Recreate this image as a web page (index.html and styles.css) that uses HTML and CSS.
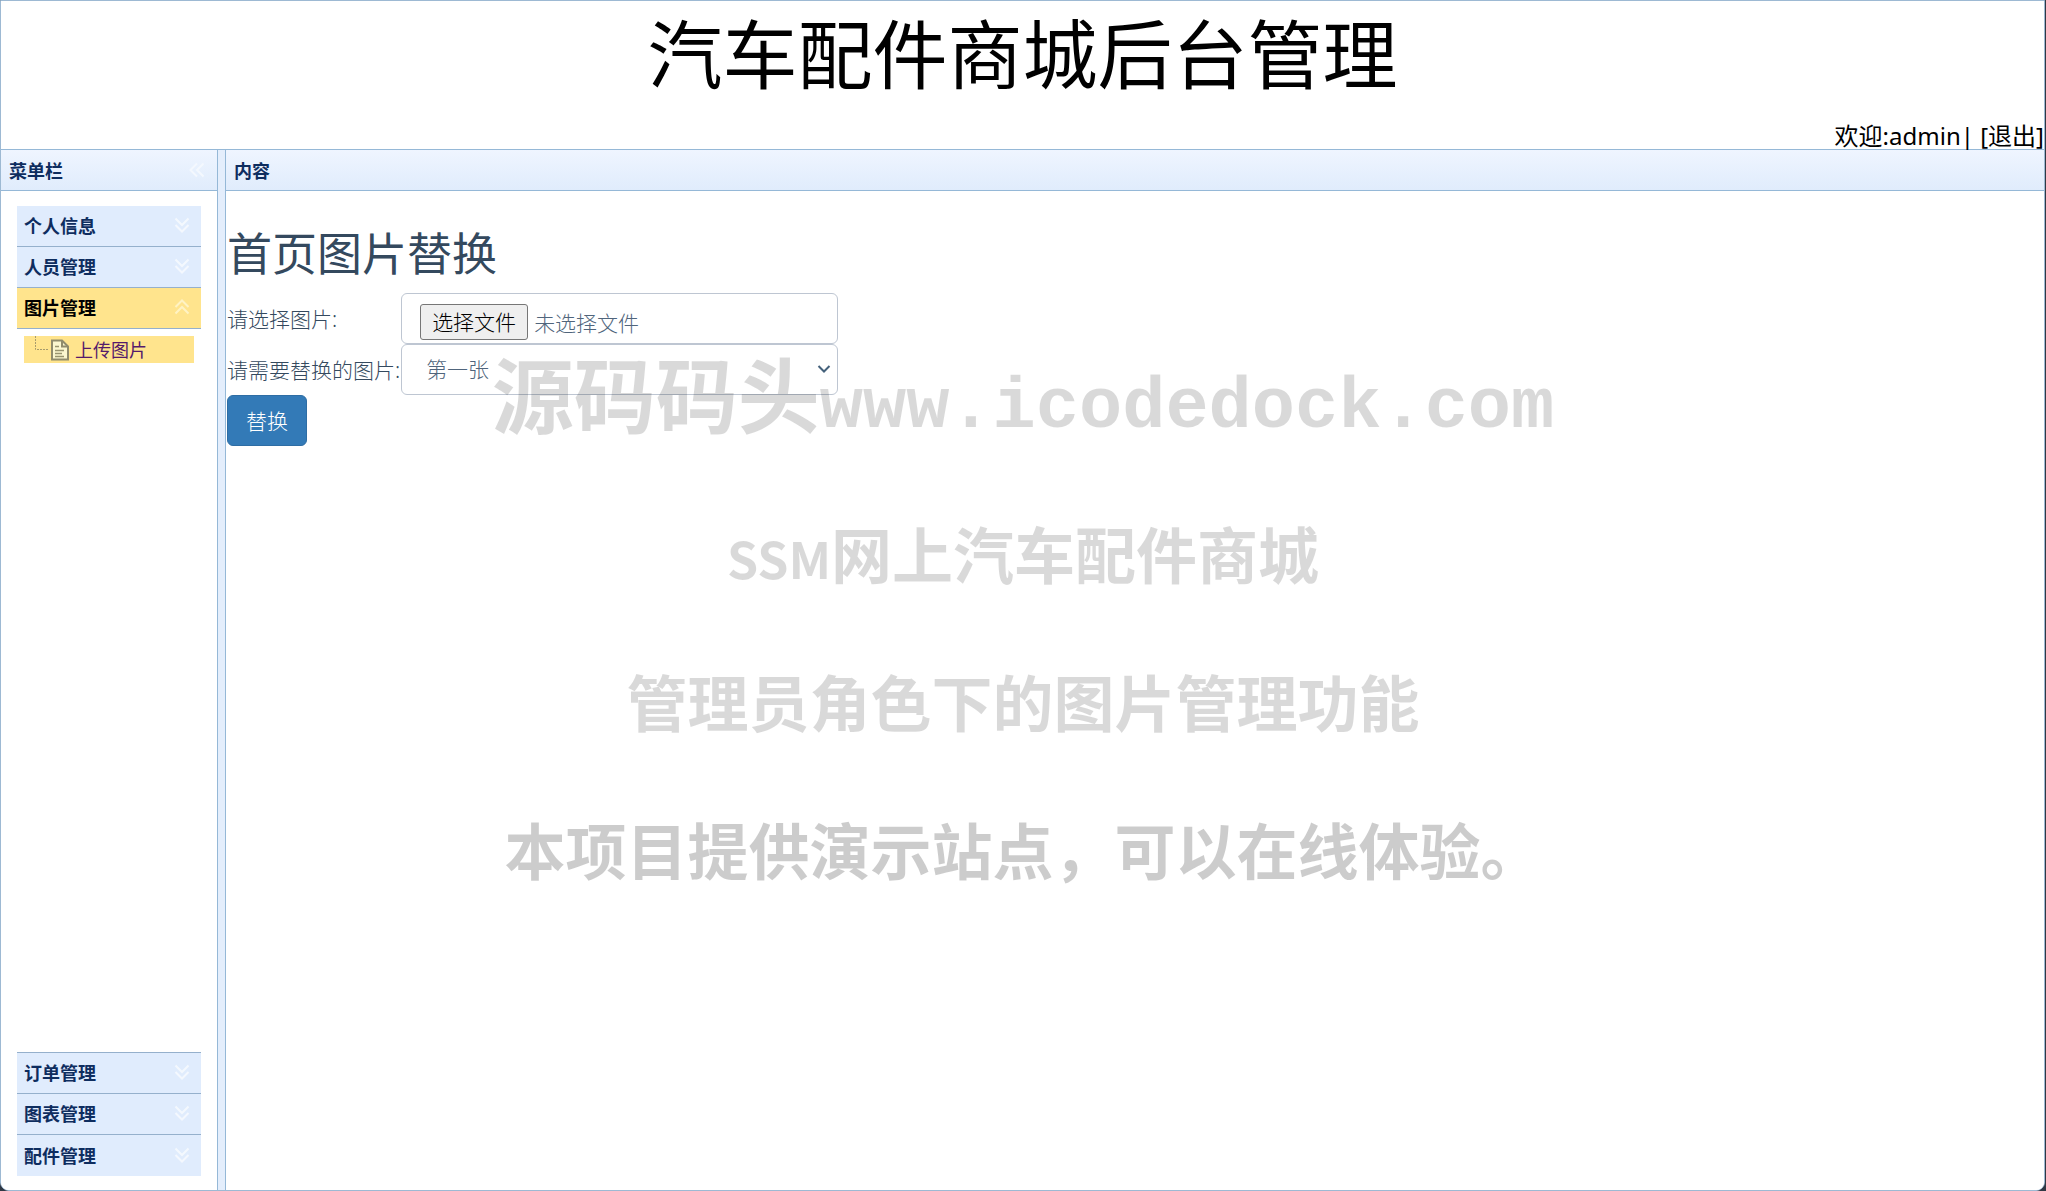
FILE: index.html
```html
<!DOCTYPE html>
<html lang="zh-CN">
<head>
    <meta charset="UTF-8">
    <meta name="viewport" content="width=device-width, initial-scale=1.0">
    <title>汽车配件商城后台管理</title>
    <link rel="stylesheet" href="styles.css">
</head>
<body>
    <svg class="sprite" aria-hidden="true">
        <symbol id="arrow" viewBox="0 0 16 16">
            <path d="M1.5 1.5 8 8l6.500-6.500M1.500 8 8 14.500 14.500 8" fill="none" stroke="currentColor" stroke-width="2"/>
        </symbol>
    </svg>

    <div class="layout">
        <header class="header">
            <h1 class="header-title">汽车配件商城后台管理</h1>
            <div class="header-user">欢迎:admin| <a href="#">[退出]</a></div>
        </header>

        <div class="main">
            <aside class="west">
                <div class="panel-header">
                    <span>菜单栏</span>
                    <button type="button" class="collapse" aria-label="收起"><svg class="arrow arrow-left"><use href="#arrow"/></svg></button>
                </div>
                <nav class="accordion">
                    <button type="button" class="acc-header">个人信息<svg class="arrow"><use href="#arrow"/></svg></button>
                    <button type="button" class="acc-header">人员管理<svg class="arrow"><use href="#arrow"/></svg></button>
                    <button type="button" class="acc-header selected">图片管理<svg class="arrow arrow-up"><use href="#arrow"/></svg></button>
                    <div class="acc-body">
                        <a href="#" class="tree-node">
                            <svg class="tree-icon" viewBox="0 0 38 27">
                                <path d="M3.500 0v13.500H17" fill="none" stroke="#a79b6c" stroke-dasharray="2 1"/>
                                <path d="M20 4.500h10l6 6v13H20z" fill="#fbf7cf" stroke="#908c6c" stroke-width="2"/>
                                <path d="M30 4.500v6h6" fill="none" stroke="#908c6c" stroke-width="2"/>
                                <path d="M23 10.500h4M23 14.500h9M23 17.500h7M23 20.500h9" stroke="#98946e" stroke-width="1.500"/>
                            </svg>
                            <span>上传图片</span>
                        </a>
                    </div>
                    <button type="button" class="acc-header">订单管理<svg class="arrow"><use href="#arrow"/></svg></button>
                    <button type="button" class="acc-header">图表管理<svg class="arrow"><use href="#arrow"/></svg></button>
                    <button type="button" class="acc-header">配件管理<svg class="arrow"><use href="#arrow"/></svg></button>
                </nav>
            </aside>

            <main class="center">
                <div class="panel-header">内容</div>
                <form class="content">
                    <h2 class="content-title">首页图片替换</h2>
                    <div class="form-grid">
                        <label class="form-label" for="file">请选择图片:</label>
                        <div class="form-control file-control">
                            <span class="file-button">选择文件</span>
                            <span>未选择文件</span>
                            <input type="file" id="file" class="file-input">
                        </div>
                        <label class="form-label" for="position">请需要替换的图片:</label>
                        <div class="select-wrap">
                            <select id="position" class="form-control">
                                <option>第一张</option>
                                <option>第二张</option>
                                <option>第三张</option>
                            </select>
                            <svg class="select-arrow" viewBox="0 0 14 8"><path d="M1.500 1 7 6.500 12.500 1" fill="none" stroke="#44617b" stroke-width="2"/></svg>
                        </div>
                    </div>
                    <button type="submit" class="btn">替换</button>
                </form>
            </main>
        </div>
    </div>

    <div class="watermark">
        <p class="mark mark-site">源码码头<span class="mark-mono">www.icodedock.com</span></p>
        <p class="mark"><span class="mark-small">SSM</span>网上汽车配件商城</p>
        <p class="mark">管理员角色下的图片管理功能</p>
        <p class="mark mark-dark">本项目提供演示站点，可以在线体验。</p>
    </div>
</body>
</html>
```
FILE: styles.css
```css
* {
    box-sizing: border-box;
}
body {
    margin: 0;
    background: #303844;
    font-family: "Noto Sans", "Noto Sans CJK SC", sans-serif;
    color: #000;
}
button, select, input {
    font-family: inherit;
}
.sprite {
    display: none;
}
.layout {
    display: flex;
    flex-direction: column;
    min-height: 100vh;
    margin-right: 1px;
    border: 1px solid #9db9d3;
    border-radius: 0 0 9px 9px;
    background: #fff;
    overflow: hidden;
}

/* header */
.header {
    display: flex;
    flex-direction: column;
    justify-content: space-between;
    height: 149px;
    border-bottom: 1px solid #95b8d7;
}
.header-title {
    margin: 0;
    font-size: 75px;
    font-weight: normal;
    line-height: 106px;
    text-align: center;
}
.header-user {
    font-size: 24px;
    line-height: 26px;
    text-align: right;
}
.header-user a {
    color: #000;
    text-decoration: none;
}

.main {
    display: flex;
    flex: 1;
    background: #e4eefc;
}
.panel-header {
    display: flex;
    align-items: center;
    justify-content: space-between;
    height: 41px;
    padding: 0 12px 0 8px;
    border-bottom: 1px solid #95b8d7;
    background: linear-gradient(#eff5ff, #e0ecfc);
    color: #0e2d5f;
    font-size: 18px;
    font-weight: bold;
}

/* menu */
.west {
    display: flex;
    flex-direction: column;
    width: 217px;
    margin-right: 7px;
    border-right: 1px solid #95b8d7;
    background: #fff;
}
.collapse {
    display: flex;
    padding: 0;
    border: 0;
    background: none;
    cursor: pointer;
}
.arrow {
    width: 16px;
    height: 16px;
    color: #f4f8fe;
}
.arrow-left {
    transform: rotate(90deg);
}
.arrow-up {
    transform: rotate(180deg);
    color: #fff3c4;
}
.accordion {
    display: flex;
    flex: 1;
    flex-direction: column;
    padding: 15px 16px 14px;
}
.acc-header {
    display: flex;
    align-items: center;
    justify-content: space-between;
    height: 41px;
    padding: 0 11px 2px 7px;
    border: 0;
    border-bottom: 1px solid #95b0cc;
    background: #e0ecfd;
    color: #0e2d5f;
    font-size: 18px;
    font-weight: bold;
    cursor: pointer;
}
.acc-header:last-child {
    border-bottom: 0;
}
.acc-header.selected {
    background: #ffe48d;
    color: #000;
}
.acc-body {
    flex: 1;
    padding: 7px;
    border-bottom: 1px solid #95b0cc;
}
.tree-node {
    display: flex;
    align-items: center;
    height: 27px;
    padding-left: 8px;
    background: #ffe48d;
    color: #551a6b;
    font-size: 18px;
    line-height: 24px;
    text-decoration: none;
}
.tree-icon {
    width: 38px;
    height: 27px;
    margin-right: 5px;
}

/* content */
.center {
    flex: 1;
    border-left: 1px solid #95b8d7;
    background: #fff;
}
.content {
    padding: 31px 1px;
    color: #34495e;
    font-size: 21px;
    font-weight: 300;
}
.content-title {
    margin: 0 0 7px;
    font-size: 45px;
    font-weight: normal;
    line-height: 64px;
}
.form-grid {
    display: grid;
    grid-template-columns: max-content 437px;
    column-gap: 1px;
    align-items: center;
}
.form-label {
    padding-bottom: 2px;
}
.form-control {
    width: 100%;
    height: 51px;
    padding: 0 18px;
    border: 1px solid #bec6d2;
    border-radius: 6px;
    background: #fff;
    color: #50657c;
    font-size: 21px;
    font-weight: 300;
}
.file-control {
    position: relative;
    display: flex;
    align-items: center;
    gap: 6px;
    padding-top: 6px;
}
.file-button {
    padding: 0 11px;
    border: 1px solid #767676;
    border-radius: 3px;
    background: #efefef;
    color: #000;
    line-height: 34px;
}
.file-input {
    position: absolute;
    inset: 0;
    width: 100%;
    opacity: 0;
    cursor: pointer;
}
.select-wrap {
    position: relative;
}
select.form-control {
    display: block;
    padding: 0 24px 2px;
    appearance: none;
}
.select-arrow {
    position: absolute;
    top: 21px;
    right: 7px;
    width: 14px;
    height: 8px;
    pointer-events: none;
}
.btn {
    height: 51px;
    padding: 0 18px 2px;
    border: 1px solid #2e6da4;
    border-radius: 6px;
    background: #337ab7;
    color: #fff;
    font-size: 21px;
    font-weight: 300;
    cursor: pointer;
}

/* watermark over the whole page */
.watermark {
    position: absolute;
    top: 305px;
    left: 0;
    right: 0;
    pointer-events: none;
}
.mark {
    margin: 0;
    color: rgba(0, 0, 0, 0.15);
    font-family: "Noto Sans CJK SC", sans-serif;
    font-size: 61px;
    font-weight: bold;
    line-height: 148px;
    text-align: center;
    white-space: nowrap;
}
.mark-mono {
    font-family: "Liberation Mono", monospace;
    font-size: 72px;
    line-height: 1;
}
.mark-small {
    font-size: 50px;
    line-height: 1;
}
.mark-site {
    font-size: 82px;
    line-height: 174px;
}
.mark-dark {
    color: rgba(0, 0, 0, 0.2);
}
```
